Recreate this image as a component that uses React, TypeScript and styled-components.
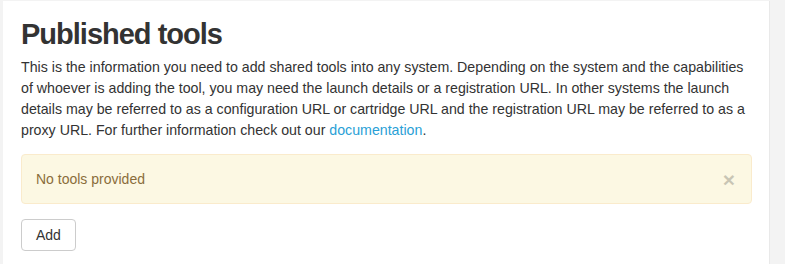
import React from 'react';
import styled, { createGlobalStyle } from 'styled-components';

const GlobalStyle = createGlobalStyle`
  html, body {
    margin: 0;
    padding: 0;
    background: #f3f3f3;
    font-family: "Liberation Sans", Arial, sans-serif;
    color: #333;
  }
`;

const Page = styled.div`
  display: flex;
  padding: 1px 0 0 3px;
  height: 263px;
  overflow: hidden;
`;

const Panel = styled.div`
  width: 731px;
  background: #fff;
  border-right: 1px solid #e9e9e9;
  padding: 17px 17px 0 18px;
`;

const Title = styled.h2`
  margin: 0 0 6px;
  font-size: 29px;
  line-height: 33px;
  font-weight: bold;
  color: #333;
  letter-spacing: -1px;
`;

const Intro = styled.p`
  margin: 0 0 13px;
  font-size: 14.2px;
  line-height: 21px;
  white-space: nowrap;
`;

const Link = styled.a`
  color: #2a9fd6;
  text-decoration: none;
`;

const Alert = styled.div`
  display: flex;
  align-items: center;
  justify-content: space-between;
  height: 48px;
  padding: 0 16px 0 14px;
  background: #fcf8e3;
  border: 1px solid #faebcc;
  border-radius: 4px;
  color: #8a6d3b;
  font-size: 14px;
  margin-bottom: 15px;
`;

const Close = styled.button`
  border: 0;
  background: none;
  padding: 0;
  font-family: "Liberation Sans", Arial, sans-serif;
  font-size: 21px;
  font-weight: bold;
  line-height: 1;
  color: #000;
  opacity: 0.2;
  cursor: pointer;
`;

const Button = styled.button`
  height: 32px;
  padding: 0 14px;
  background: #fff;
  border: 1px solid #ccc;
  border-radius: 4px;
  font-family: "Liberation Sans", Arial, sans-serif;
  font-size: 14px;
  color: #333;
  cursor: pointer;
`;

export default function App() {
  return (
    <>
      <GlobalStyle />
      <Page>
        <Panel>
          <Title>Published tools</Title>
          <Intro>
            This is the information you need to add shared tools into any system. Depending on the system and the capabilities
            <br />
            of whoever is adding the tool, you may need the launch details or a registration URL. In other systems the launch
            <br />
            details may be referred to as a configuration URL or cartridge URL and the registration URL may be referred to as a
            <br />
            proxy URL. For further information check out our <Link href="#">documentation</Link>.
          </Intro>
          <Alert>
            <span>No tools provided</span>
            <Close aria-label="Close">×</Close>
          </Alert>
          <Button>Add</Button>
        </Panel>
      </Page>
    </>
  );
}
